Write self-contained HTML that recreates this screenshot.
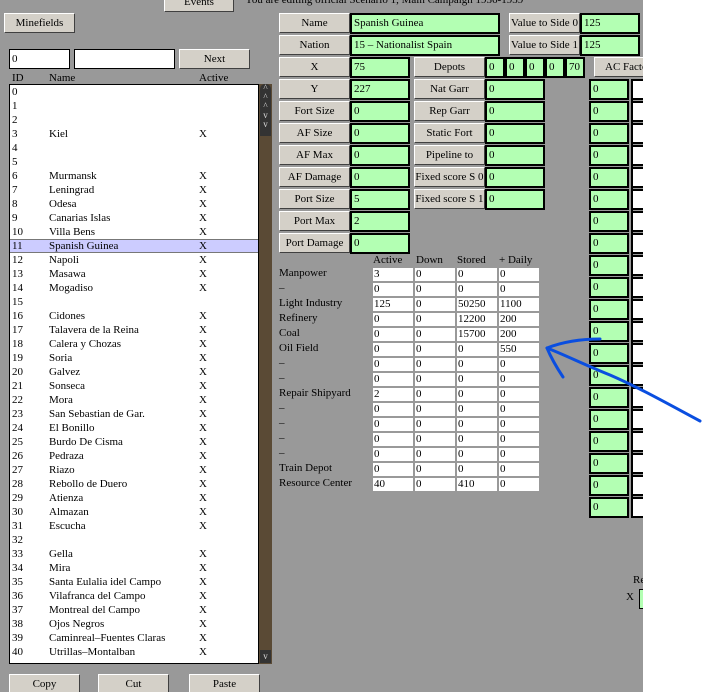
<!DOCTYPE html>
<html><head><meta charset="utf-8"><style>
*{box-sizing:border-box;margin:0;padding:0}
body{width:703px;height:692px;overflow:hidden;background:#fff;font-family:"Liberation Serif",serif;font-size:11px;color:#000;position:relative}
#bg{position:absolute;left:0;top:0;width:643px;height:692px;background:#999;overflow:hidden}
.a{position:absolute;white-space:nowrap}
.b{position:absolute;background:#d4d0c8;border:1px solid;border-color:#fff #404040 #404040 #fff;text-align:center;line-height:18px;height:20px;font-size:11px;white-space:nowrap;overflow:hidden}
.g{position:absolute;background:#b3ffb3;border:2px solid #000;height:21px;line-height:17px;padding-left:2px;font-size:11px}
.w{position:absolute;background:#fff;border:1px solid #000;height:20px;line-height:18px;padding-left:2px}
.t{position:absolute;background:#fff;height:13px;width:40px;line-height:13px;padding-left:1px;font-size:11px}
.r{position:absolute;left:0;height:14px;line-height:14px;width:100%}
.r span{position:absolute}
</style></head><body>
<div id="bg">
<div class="b" style="left:164px;top:-8px;width:70px">Events</div>
<div class="a" style="left:245px;top:-6px">You are editing official Scenario 1, Main Campaign 1936-1939</div>
<div class="b" style="left:4px;top:13px;width:71px">Minefields</div>
<div class="w" style="left:9px;top:49px;width:61px">0</div>
<div class="w" style="left:74px;top:49px;width:101px"></div>
<div class="b" style="left:179px;top:49px;width:71px">Next</div>
<div class="a" style="left:12px;top:72px">ID</div>
<div class="a" style="left:49px;top:72px">Name</div>
<div class="a" style="left:199px;top:72px">Active</div>
<div class="a" style="left:9px;top:84px;width:250px;height:580px;background:#fff;border:1px solid #000;overflow:hidden">
<div class="r" style="top:0"><span style="left:2px">0</span></div>
<div class="r" style="top:14px"><span style="left:2px">1</span></div>
<div class="r" style="top:28px"><span style="left:2px">2</span></div>
<div class="r" style="top:42px"><span style="left:2px">3</span><span style="left:39px">Kiel</span><span style="left:189px">X</span></div>
<div class="r" style="top:56px"><span style="left:2px">4</span></div>
<div class="r" style="top:70px"><span style="left:2px">5</span></div>
<div class="r" style="top:84px"><span style="left:2px">6</span><span style="left:39px">Murmansk</span><span style="left:189px">X</span></div>
<div class="r" style="top:98px"><span style="left:2px">7</span><span style="left:39px">Leningrad</span><span style="left:189px">X</span></div>
<div class="r" style="top:112px"><span style="left:2px">8</span><span style="left:39px">Odesa</span><span style="left:189px">X</span></div>
<div class="r" style="top:126px"><span style="left:2px">9</span><span style="left:39px">Canarias Islas</span><span style="left:189px">X</span></div>
<div class="r" style="top:140px"><span style="left:2px">10</span><span style="left:39px">Villa Bens</span><span style="left:189px">X</span></div>
<div class="r" style="top:154px;background:#ccccff;border-top:1px solid #777;border-bottom:1px solid #777;line-height:12px"><span style="left:2px">11</span><span style="left:39px">Spanish Guinea</span><span style="left:189px">X</span></div>
<div class="r" style="top:168px"><span style="left:2px">12</span><span style="left:39px">Napoli</span><span style="left:189px">X</span></div>
<div class="r" style="top:182px"><span style="left:2px">13</span><span style="left:39px">Masawa</span><span style="left:189px">X</span></div>
<div class="r" style="top:196px"><span style="left:2px">14</span><span style="left:39px">Mogadiso</span><span style="left:189px">X</span></div>
<div class="r" style="top:210px"><span style="left:2px">15</span></div>
<div class="r" style="top:224px"><span style="left:2px">16</span><span style="left:39px">Cidones</span><span style="left:189px">X</span></div>
<div class="r" style="top:238px"><span style="left:2px">17</span><span style="left:39px">Talavera de la Reina</span><span style="left:189px">X</span></div>
<div class="r" style="top:252px"><span style="left:2px">18</span><span style="left:39px">Calera y Chozas</span><span style="left:189px">X</span></div>
<div class="r" style="top:266px"><span style="left:2px">19</span><span style="left:39px">Soria</span><span style="left:189px">X</span></div>
<div class="r" style="top:280px"><span style="left:2px">20</span><span style="left:39px">Galvez</span><span style="left:189px">X</span></div>
<div class="r" style="top:294px"><span style="left:2px">21</span><span style="left:39px">Sonseca</span><span style="left:189px">X</span></div>
<div class="r" style="top:308px"><span style="left:2px">22</span><span style="left:39px">Mora</span><span style="left:189px">X</span></div>
<div class="r" style="top:322px"><span style="left:2px">23</span><span style="left:39px">San Sebastian de Gar.</span><span style="left:189px">X</span></div>
<div class="r" style="top:336px"><span style="left:2px">24</span><span style="left:39px">El Bonillo</span><span style="left:189px">X</span></div>
<div class="r" style="top:350px"><span style="left:2px">25</span><span style="left:39px">Burdo De Cisma</span><span style="left:189px">X</span></div>
<div class="r" style="top:364px"><span style="left:2px">26</span><span style="left:39px">Pedraza</span><span style="left:189px">X</span></div>
<div class="r" style="top:378px"><span style="left:2px">27</span><span style="left:39px">Riazo</span><span style="left:189px">X</span></div>
<div class="r" style="top:392px"><span style="left:2px">28</span><span style="left:39px">Rebollo de Duero</span><span style="left:189px">X</span></div>
<div class="r" style="top:406px"><span style="left:2px">29</span><span style="left:39px">Atienza</span><span style="left:189px">X</span></div>
<div class="r" style="top:420px"><span style="left:2px">30</span><span style="left:39px">Almazan</span><span style="left:189px">X</span></div>
<div class="r" style="top:434px"><span style="left:2px">31</span><span style="left:39px">Escucha</span><span style="left:189px">X</span></div>
<div class="r" style="top:448px"><span style="left:2px">32</span></div>
<div class="r" style="top:462px"><span style="left:2px">33</span><span style="left:39px">Gella</span><span style="left:189px">X</span></div>
<div class="r" style="top:476px"><span style="left:2px">34</span><span style="left:39px">Mira</span><span style="left:189px">X</span></div>
<div class="r" style="top:490px"><span style="left:2px">35</span><span style="left:39px">Santa Eulalia idel Campo</span><span style="left:189px">X</span></div>
<div class="r" style="top:504px"><span style="left:2px">36</span><span style="left:39px">Vilafranca del Campo</span><span style="left:189px">X</span></div>
<div class="r" style="top:518px"><span style="left:2px">37</span><span style="left:39px">Montreal del Campo</span><span style="left:189px">X</span></div>
<div class="r" style="top:532px"><span style="left:2px">38</span><span style="left:39px">Ojos Negros</span><span style="left:189px">X</span></div>
<div class="r" style="top:546px"><span style="left:2px">39</span><span style="left:39px">Caminreal–Fuentes Claras</span><span style="left:189px">X</span></div>
<div class="r" style="top:560px"><span style="left:2px">40</span><span style="left:39px">Utrillas–Montalban</span><span style="left:189px">X</span></div>
</div>
<div class="a" style="left:259px;top:84px;width:13px;height:580px;background:#5a4a35"></div>
<div class="a" style="left:260px;top:84px;width:11px;height:52px;background:#333;border-radius:5px 5px 0 0;color:#ddd;font-size:9px;text-align:center;line-height:9px">^<br>^<br>^<br>v<br>v</div>
<div class="a" style="left:260px;top:650px;width:11px;height:13px;background:#333;color:#ddd;font-size:9px;text-align:center;line-height:12px">v</div>
<div class="b" style="left:9px;top:674px;width:71px">Copy</div>
<div class="b" style="left:98px;top:674px;width:71px">Cut</div>
<div class="b" style="left:189px;top:674px;width:71px">Paste</div>

<div class="b" style="left:279px;top:13px;width:71px">Name</div><div class="g" style="left:350px;top:13px;width:150px">Spanish Guinea</div>
<div class="b" style="left:279px;top:35px;width:71px">Nation</div><div class="g" style="left:350px;top:35px;width:150px">15 – Nationalist Spain</div>
<div class="b" style="left:509px;top:13px;width:71px">Value to Side 0</div><div class="g" style="left:580px;top:13px;width:60px">125</div>
<div class="b" style="left:509px;top:35px;width:71px">Value to Side 1</div><div class="g" style="left:580px;top:35px;width:60px">125</div>
<div class="b" style="left:279px;top:57px;width:71px">X</div><div class="g" style="left:350px;top:57px;width:60px">75</div>
<div class="b" style="left:279px;top:79px;width:71px">Y</div><div class="g" style="left:350px;top:79px;width:60px">227</div>
<div class="b" style="left:279px;top:101px;width:71px">Fort Size</div><div class="g" style="left:350px;top:101px;width:60px">0</div>
<div class="b" style="left:279px;top:123px;width:71px">AF Size</div><div class="g" style="left:350px;top:123px;width:60px">0</div>
<div class="b" style="left:279px;top:145px;width:71px">AF Max</div><div class="g" style="left:350px;top:145px;width:60px">0</div>
<div class="b" style="left:279px;top:167px;width:71px">AF Damage</div><div class="g" style="left:350px;top:167px;width:60px">0</div>
<div class="b" style="left:279px;top:189px;width:71px">Port Size</div><div class="g" style="left:350px;top:189px;width:60px">5</div>
<div class="b" style="left:279px;top:211px;width:71px">Port Max</div><div class="g" style="left:350px;top:211px;width:60px">2</div>
<div class="b" style="left:279px;top:233px;width:71px">Port Damage</div><div class="g" style="left:350px;top:233px;width:60px">0</div>
<div class="b" style="left:414px;top:57px;width:71px">Depots</div>
<div class="g" style="left:485px;top:57px;width:20px">0</div><div class="g" style="left:505px;top:57px;width:20px">0</div><div class="g" style="left:525px;top:57px;width:20px">0</div><div class="g" style="left:545px;top:57px;width:20px">0</div><div class="g" style="left:565px;top:57px;width:20px">70</div>
<div class="b" style="left:594px;top:57px;width:70px;text-align:left;padding-left:10px">AC Factory</div>
<div class="b" style="left:414px;top:79px;width:71px">Nat Garr</div><div class="g" style="left:485px;top:79px;width:60px">0</div>
<div class="b" style="left:414px;top:101px;width:71px">Rep Garr</div><div class="g" style="left:485px;top:101px;width:60px">0</div>
<div class="b" style="left:414px;top:123px;width:71px">Static Fort</div><div class="g" style="left:485px;top:123px;width:60px">0</div>
<div class="b" style="left:414px;top:145px;width:71px">Pipeline to</div><div class="g" style="left:485px;top:145px;width:60px">0</div>
<div class="b" style="left:414px;top:167px;width:71px">Fixed score S 0</div><div class="g" style="left:485px;top:167px;width:60px">0</div>
<div class="b" style="left:414px;top:189px;width:71px">Fixed score S 1</div><div class="g" style="left:485px;top:189px;width:60px">0</div>

<div class="a" style="left:589px;top:79px;width:60px">
<div class="g" style="left:0;top:0;width:40px">0</div><div class="g" style="left:0;top:22px;width:40px">0</div><div class="g" style="left:0;top:44px;width:40px">0</div><div class="g" style="left:0;top:66px;width:40px">0</div><div class="g" style="left:0;top:88px;width:40px">0</div><div class="g" style="left:0;top:110px;width:40px">0</div><div class="g" style="left:0;top:132px;width:40px">0</div><div class="g" style="left:0;top:154px;width:40px">0</div><div class="g" style="left:0;top:176px;width:40px">0</div><div class="g" style="left:0;top:198px;width:40px">0</div><div class="g" style="left:0;top:220px;width:40px">0</div><div class="g" style="left:0;top:242px;width:40px">0</div><div class="g" style="left:0;top:264px;width:40px">0</div><div class="g" style="left:0;top:286px;width:40px">0</div><div class="g" style="left:0;top:308px;width:40px">0</div><div class="g" style="left:0;top:330px;width:40px">0</div><div class="g" style="left:0;top:352px;width:40px">0</div><div class="g" style="left:0;top:374px;width:40px">0</div><div class="g" style="left:0;top:396px;width:40px">0</div><div class="g" style="left:0;top:418px;width:40px">0</div>
</div>
<div class="a" style="left:631px;top:79px;width:12px;height:439px;background:repeating-linear-gradient(#000 0 2px,#fff 2px 19px,#000 19px 21px,#999 21px 22px);border-left:2px solid #000"></div>

<div class="a" style="left:373px;top:254px">Active</div><div class="a" style="left:416px;top:254px">Down</div><div class="a" style="left:457px;top:254px">Stored</div><div class="a" style="left:499px;top:254px">+ Daily</div>
<div class="a" style="left:279px;top:267px;width:264px">
<div class="a" style="top:0">Manpower</div><div class="t" style="left:94px;top:1px">3</div><div class="t" style="left:136px;top:1px">0</div><div class="t" style="left:178px;top:1px">0</div><div class="t" style="left:220px;top:1px">0</div>
<div class="a" style="top:15px">–</div><div class="t" style="left:94px;top:16px">0</div><div class="t" style="left:136px;top:16px">0</div><div class="t" style="left:178px;top:16px">0</div><div class="t" style="left:220px;top:16px">0</div>
<div class="a" style="top:30px">Light Industry</div><div class="t" style="left:94px;top:31px">125</div><div class="t" style="left:136px;top:31px">0</div><div class="t" style="left:178px;top:31px">50250</div><div class="t" style="left:220px;top:31px">1100</div>
<div class="a" style="top:45px">Refinery</div><div class="t" style="left:94px;top:46px">0</div><div class="t" style="left:136px;top:46px">0</div><div class="t" style="left:178px;top:46px">12200</div><div class="t" style="left:220px;top:46px">200</div>
<div class="a" style="top:60px">Coal</div><div class="t" style="left:94px;top:61px">0</div><div class="t" style="left:136px;top:61px">0</div><div class="t" style="left:178px;top:61px">15700</div><div class="t" style="left:220px;top:61px">200</div>
<div class="a" style="top:75px">Oil Field</div><div class="t" style="left:94px;top:76px">0</div><div class="t" style="left:136px;top:76px">0</div><div class="t" style="left:178px;top:76px">0</div><div class="t" style="left:220px;top:76px">550</div>
<div class="a" style="top:90px">–</div><div class="t" style="left:94px;top:91px">0</div><div class="t" style="left:136px;top:91px">0</div><div class="t" style="left:178px;top:91px">0</div><div class="t" style="left:220px;top:91px">0</div>
<div class="a" style="top:105px">–</div><div class="t" style="left:94px;top:106px">0</div><div class="t" style="left:136px;top:106px">0</div><div class="t" style="left:178px;top:106px">0</div><div class="t" style="left:220px;top:106px">0</div>
<div class="a" style="top:120px">Repair Shipyard</div><div class="t" style="left:94px;top:121px">2</div><div class="t" style="left:136px;top:121px">0</div><div class="t" style="left:178px;top:121px">0</div><div class="t" style="left:220px;top:121px">0</div>
<div class="a" style="top:135px">–</div><div class="t" style="left:94px;top:136px">0</div><div class="t" style="left:136px;top:136px">0</div><div class="t" style="left:178px;top:136px">0</div><div class="t" style="left:220px;top:136px">0</div>
<div class="a" style="top:150px">–</div><div class="t" style="left:94px;top:151px">0</div><div class="t" style="left:136px;top:151px">0</div><div class="t" style="left:178px;top:151px">0</div><div class="t" style="left:220px;top:151px">0</div>
<div class="a" style="top:165px">–</div><div class="t" style="left:94px;top:166px">0</div><div class="t" style="left:136px;top:166px">0</div><div class="t" style="left:178px;top:166px">0</div><div class="t" style="left:220px;top:166px">0</div>
<div class="a" style="top:180px">–</div><div class="t" style="left:94px;top:181px">0</div><div class="t" style="left:136px;top:181px">0</div><div class="t" style="left:178px;top:181px">0</div><div class="t" style="left:220px;top:181px">0</div>
<div class="a" style="top:195px">Train Depot</div><div class="t" style="left:94px;top:196px">0</div><div class="t" style="left:136px;top:196px">0</div><div class="t" style="left:178px;top:196px">0</div><div class="t" style="left:220px;top:196px">0</div>
<div class="a" style="top:210px">Resource Center</div><div class="t" style="left:94px;top:211px">40</div><div class="t" style="left:136px;top:211px">0</div><div class="t" style="left:178px;top:211px">410</div><div class="t" style="left:220px;top:211px">0</div>
</div>

<div class="a" style="left:633px;top:574px">Re</div>
<div class="a" style="left:626px;top:591px">X</div>
<div class="a" style="left:639px;top:589px;width:6px;height:20px;background:#b3ffb3;border:1px solid #000;border-right:none"></div>
</div>

<svg class="a" style="left:0;top:0" width="703" height="692"><g fill="none" stroke="#0a4ee0" stroke-width="3" stroke-linecap="round"><path d="M700,421 C670,405 640,388 610,375 C585,365 565,355 547,348"/><path d="M547,348 C565,341 585,339 600,339"/><path d="M547,348 C552,360 557,368 563,377"/></g></svg>
</body></html>
